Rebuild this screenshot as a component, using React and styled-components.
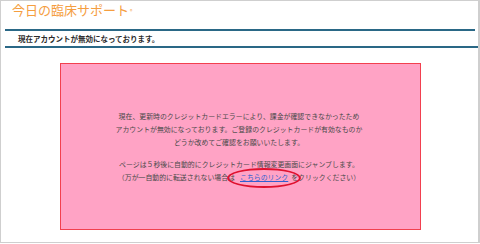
import React from "react";
import styled, { createGlobalStyle } from "styled-components";

const Global = createGlobalStyle`
  html, body { margin: 0; padding: 0; background: #ffffff; }
  body { font-family: "Noto Sans CJK JP", "Noto Sans", sans-serif; }
`;

const Frame = styled.div`
  box-sizing: border-box;
  width: 480px;
  height: 243px;
  border-top: 1px solid #cfcfcf;
  border-left: 1px solid #cfcfcf;
  border-right: 2px solid #cfcfcf;
  border-bottom: 1px solid #cfcfcf;
  display: flex;
  flex-direction: column;
  overflow: hidden;
`;

const Header = styled.header`
  height: 28px;
  padding-left: 11px;
  display: flex;
  align-items: flex-start;
`;

const Logo = styled.div`
  font-size: 13px;
  line-height: 17px;
  color: #f59e3f;
`;

const LogoMark = styled.sup`
  font-size: 5px;
  vertical-align: top;
  position: relative;
  top: 1px;
  margin-left: 1px;
`;

const Rule = styled.div`
  height: 2px;
  background: #2a6886;
  margin-left: 4px;
  margin-right: ${(p) => p.$right}px;
`;

const TitleRow = styled.h1`
  margin: 0;
  height: 15px;
  padding-left: 17px;
  display: flex;
  align-items: center;
  font-size: 7.5px;
  font-weight: 700;
  color: #2b2b2b;
`;

const Body = styled.main`
  padding: 15px 0 0 59px;
`;

const Notice = styled.section`
  box-sizing: border-box;
  width: 361px;
  height: 167px;
  background: #ffa3c5;
  border: 1.5px solid #f2404f;
  display: flex;
  flex-direction: column;
  align-items: center;
  justify-content: center;
  padding-right: 3px;
  gap: 9px;
`;

const Para = styled.p`
  margin: 0;
  font-size: 6.9px;
  line-height: 13px;
  color: #4a4a4a;
  text-align: center;
`;

const LinkWrap = styled.span`
  position: relative;
  display: inline-block;
  margin: 0 3px 0 5px;
`;

const Link = styled.a`
  color: #2f5fd0;
  text-decoration: underline;
`;

const Circle = styled.span`
  position: absolute;
  left: -13px;
  top: -3px;
  width: 70px;
  height: 16px;
  border: 2px solid #e0112f;
  border-radius: 50%;
  pointer-events: none;
`;

export default function App() {
  return (
    <>
      <Global />
      <Frame>
        <Header>
          <Logo>
            今日の臨床サポート<LogoMark>®</LogoMark>
          </Logo>
        </Header>
        <Rule $right={3} />
        <TitleRow>現在アカウントが無効になっております。</TitleRow>
        <Rule $right={0} />
        <Body>
          <Notice>
            <Para>
              現在、更新時のクレジットカードエラーにより、課金が確認できなかったため
              <br />
              アカウントが無効になっております。ご登録のクレジットカードが有効なものか
              <br />
              どうか改めてご確認をお願いいたします。
            </Para>
            <Para>
              ページは５秒後に自動的にクレジットカード情報変更画面にジャンプします。
              <br />
              （万が一自動的に転送されない場合は
              <LinkWrap>
                <Link href="#">こちらのリンク</Link>
                <Circle />
              </LinkWrap>
              をクリックください）
            </Para>
          </Notice>
        </Body>
      </Frame>
    </>
  );
}
